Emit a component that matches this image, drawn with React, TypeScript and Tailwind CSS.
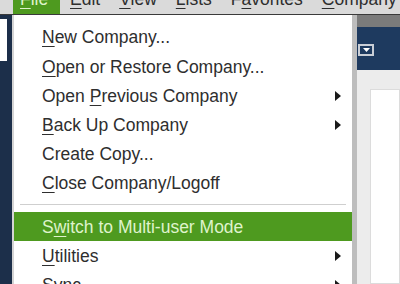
import React from "react";

type Item = { label: string; u: number; arrow?: boolean; active?: boolean };

const top: Item[] = [
  { label: "New Company...", u: 0 },
  { label: "Open or Restore Company...", u: 0 },
  { label: "Open Previous Company", u: 5, arrow: true },
  { label: "Back Up Company", u: 0, arrow: true },
  { label: "Create Copy...", u: -1 },
  { label: "Close Company/Logoff", u: 0 },
];

const bottom: Item[] = [
  { label: "Switch to Multi-user Mode", u: 1, active: true },
  { label: "Utilities", u: 0, arrow: true },
  { label: "Sync", u: 1, arrow: true },
];

function Label({ text, u }: { text: string; u: number }) {
  if (u < 0) return <span>{text}</span>;
  return (
    <span>
      {text.slice(0, u)}
      <span className="underline underline-offset-[3px] decoration-1">{text[u]}</span>
      {text.slice(u + 1)}
    </span>
  );
}

function Row({ item }: { item: Item }) {
  return (
    <div
      className={`flex h-[29.2px] items-center justify-between pl-[28px] pr-[11px] ${
        item.active ? "bg-[#4e9a1f] text-[#dff3cc]" : "text-[#2e2e2e]"
      }`}
    >
      <Label text={item.label} u={item.u} />
      {item.arrow && (
        <svg width="6" height="10" viewBox="0 0 6 10">
          <path d="M0 0 L6 5 L0 10 Z" fill="#1a1a1a" />
        </svg>
      )}
    </div>
  );
}

const bar = [
  { t: "File", u: 0 },
  { t: "Edit", u: 0 },
  { t: "View", u: 0 },
  { t: "Lists", u: 0 },
  { t: "Favorites", u: 1 },
  { t: "Company", u: 0 },
];

export default function App() {
  return (
    <div
      className="w-[400px] h-[284px] overflow-hidden flex flex-col bg-[#1c2f4a]"
      style={{ fontFamily: '"Liberation Sans", Arial, sans-serif' }}
    >
      {/* menu bar, tops of the words are cut off */}
      <div className="h-[15px] shrink-0 bg-[#dadada] border-b border-[#3a3a3a] flex items-end text-[17.5px] leading-none text-[#2e2e2e] overflow-hidden">
        <div className="w-[13px] shrink-0" />
        <div className="bg-[#4e9a1f] text-[#dff3cc] w-[47px] h-full flex items-end pl-[7px] pb-[6px]">
          <Label text="File" u={0} />
        </div>
        <div className="flex gap-[19px] pl-[10px] pb-[6px]">
          {bar.slice(1).map((b) => (
            <Label key={b.t} text={b.t} u={b.u} />
          ))}
        </div>
      </div>

      <div className="flex flex-1 min-h-0">
        {/* left window edge */}
        <div className="w-[12px] shrink-0 pt-[4px]">
          <div className="w-[7px] h-[42px] bg-white" />
        </div>

        {/* dropdown */}
        <div className="w-[340px] shrink-0 bg-white border-l-2 border-[#d4d4d4] pt-[8px] text-[17.5px]">
          {top.map((it) => (
            <Row key={it.label} item={it} />
          ))}
          <div className="mx-[6px] mt-[6px] mb-[7px] h-px bg-[#cfcfcf]" />
          {bottom.map((it) => (
            <Row key={it.label} item={it} />
          ))}
        </div>
        <div className="w-[5px] shrink-0 bg-[#bdbdbd]" />

        {/* window behind */}
        <div className="flex-1 flex flex-col bg-[#ececec]">
          <div className="h-[12px] bg-[#7b7b7b]" />
          <div className="h-[43px] bg-[#1e3a5f] pt-[17px] pl-[1px]">
            <div className="w-[16px] h-[12px] border-2 border-[#c9ced6] bg-[#1e3a5f] flex items-center justify-center">
              <svg width="7" height="4" viewBox="0 0 7 4">
                <path d="M0 0 H7 L3.5 4 Z" fill="#ffffff" />
              </svg>
            </div>
          </div>
          <div className="flex-1 pl-[13px] pt-[19px]">
            <div className="h-full bg-white border border-[#dcdcdc]" />
          </div>
        </div>
      </div>
    </div>
  );
}
